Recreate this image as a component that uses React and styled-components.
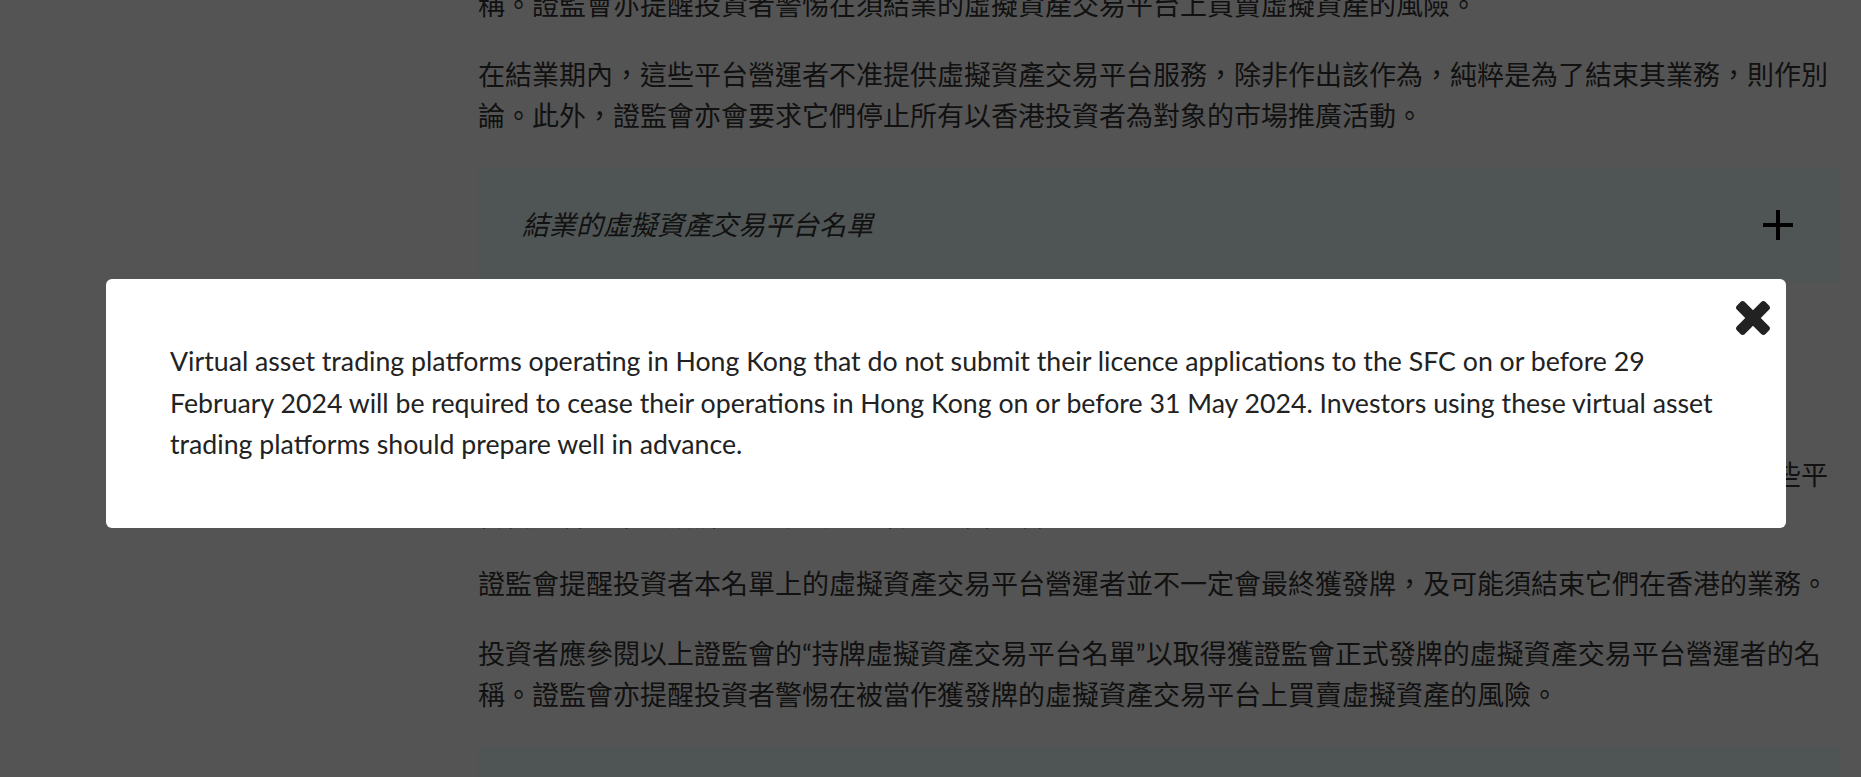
import React from 'react'
import styled, { createGlobalStyle } from 'styled-components'

const GlobalStyle = createGlobalStyle`
  html, body {
    margin: 0;
    padding: 0;
    background: #ffffff;
    overflow: hidden;
  }
  body {
    font-family: Lato, "Noto Sans CJK TC", sans-serif;
  }
`

const Page = styled.div`
  width: 1363px;
  margin: -55.75px 0 0 478px;
  display: flex;
  flex-direction: column;
  color: #363636;
  font-family: Lato, "Noto Sans CJK TC", sans-serif;
`

const Para = styled.p`
  margin: 0 0 ${(p) => p.$gap || 30}px;
  font-size: 27px;
  line-height: 40.5px;
`

const SectionTitle = styled.h3`
  margin: 0 0 30px;
  font-size: 30px;
  line-height: 42px;
  font-weight: 700;
`

const Accordion = styled.div`
  height: 115px;
  box-sizing: border-box;
  padding: 0 48px 0 44px;
  margin: 0 0 30px;
  background: #f0ffff;
  display: flex;
  align-items: center;
  justify-content: space-between;
`

const AccordionTitle = styled.span`
  font-size: 27px;
  line-height: 40.5px;
  font-style: italic;
`

const PlusIcon = () => (
  <svg width="30" height="30" viewBox="0 0 30 30">
    <rect x="13" y="0" width="4" height="30" fill="#000" />
    <rect x="0" y="13" width="30" height="4" fill="#000" />
  </svg>
)

const Overlay = styled.div`
  position: fixed;
  inset: 0;
  background: rgba(0, 0, 0, 0.67);
`

const Modal = styled.div`
  position: relative;
  width: 1680px;
  box-sizing: border-box;
  margin: 279.3px 0 0 106px;
  padding: 62px 64px 62px;
  background: #ffffff;
  border-radius: 6px;
`

const ModalText = styled.p`
  margin: 0;
  font-family: Lato, sans-serif;
  font-size: 26.7px;
  line-height: 41.6px;
  color: #222222;
`

const CloseButton = styled.button`
  position: absolute;
  top: 22px;
  right: 16px;
  width: 34px;
  height: 34px;
  padding: 0;
  border: none;
  background: none;
  cursor: pointer;
  display: flex;
  svg {
    width: 100%;
    height: 100%;
  }
`

const CloseIcon = () => (
  <svg viewBox="302 366 1188 1188">
    <path
      fill="#222"
      d="M1490 1322q0 40-28 68l-136 136q-28 28-68 28t-68-28l-294-294-294 294q-28 28-68 28t-68-28l-136-136q-28-28-28-68t28-68l294-294-294-294q-28-28-28-68t28-68l136-136q28-28 68-28t68 28l294 294 294-294q28-28 68-28t68 28l136 136q28 28 28 68t-28 68l-294 294 294 294q28 28 28 68z"
    />
  </svg>
)

const App = () => {
  return (
    <>
      <GlobalStyle />
      <Page lang="zh-Hant-TW">
        <Para>
          投資者應參閱以上證監會的“持牌虛擬資產交易平台名單”以取得獲證監會正式發牌的虛擬資產交易平台營運者的名稱。證監會亦提醒投資者警惕在須結業的虛擬資產交易平台上買賣虛擬資產的風險。
        </Para>
        <Para $gap={31.5}>
          在結業期內，這些平台營運者不准提供虛擬資產交易平台服務，除非作出該作為，純粹是為了結束其業務，則作別論。此外，證監會亦會要求它們停止所有以香港投資者為對象的市場推廣活動。
        </Para>
        <Accordion>
          <AccordionTitle>結業的虛擬資產交易平台名單</AccordionTitle>
          <PlusIcon />
        </Accordion>
        <SectionTitle>虛擬資產交易平台申請者名單</SectionTitle>
        <Para>以下是已向證監會提交牌照申請的虛擬資產交易平台營運者名單。</Para>
        <Para $gap={28}>
          根據過渡安排，名單上的申請者在證監會處理其牌照申請期間可繼續在香港營運。然而，投資者應特別留意這些平台營運者尚未獲發牌，亦不受證監會的全面規管。
        </Para>
        <Para $gap={29.5}>
          證監會提醒投資者本名單上的虛擬資產交易平台營運者並不一定會最終獲發牌，及可能須結束它們在香港的業務。
        </Para>
        <Para $gap={32}>
          投資者應參閱以上證監會的“持牌虛擬資產交易平台名單”以取得獲證監會正式發牌的虛擬資產交易平台營運者的名稱。證監會亦提醒投資者警惕在被當作獲發牌的虛擬資產交易平台上買賣虛擬資產的風險。
        </Para>
        <Accordion>
          <AccordionTitle>被當作獲發牌的虛擬資產交易平台名單</AccordionTitle>
          <PlusIcon />
        </Accordion>
      </Page>
      <Overlay>
        <Modal>
          <CloseButton aria-label="Close">
            <CloseIcon />
          </CloseButton>
          <ModalText lang="en">
            Virtual asset trading platforms operating in Hong Kong that do not submit their licence
            applications to the SFC on or before 29 February 2024 will be required to cease their
            operations in Hong Kong on or before 31 May 2024. Investors using these virtual asset
            trading platforms should prepare well in advance.
          </ModalText>
        </Modal>
      </Overlay>
    </>
  )
}

export default App
